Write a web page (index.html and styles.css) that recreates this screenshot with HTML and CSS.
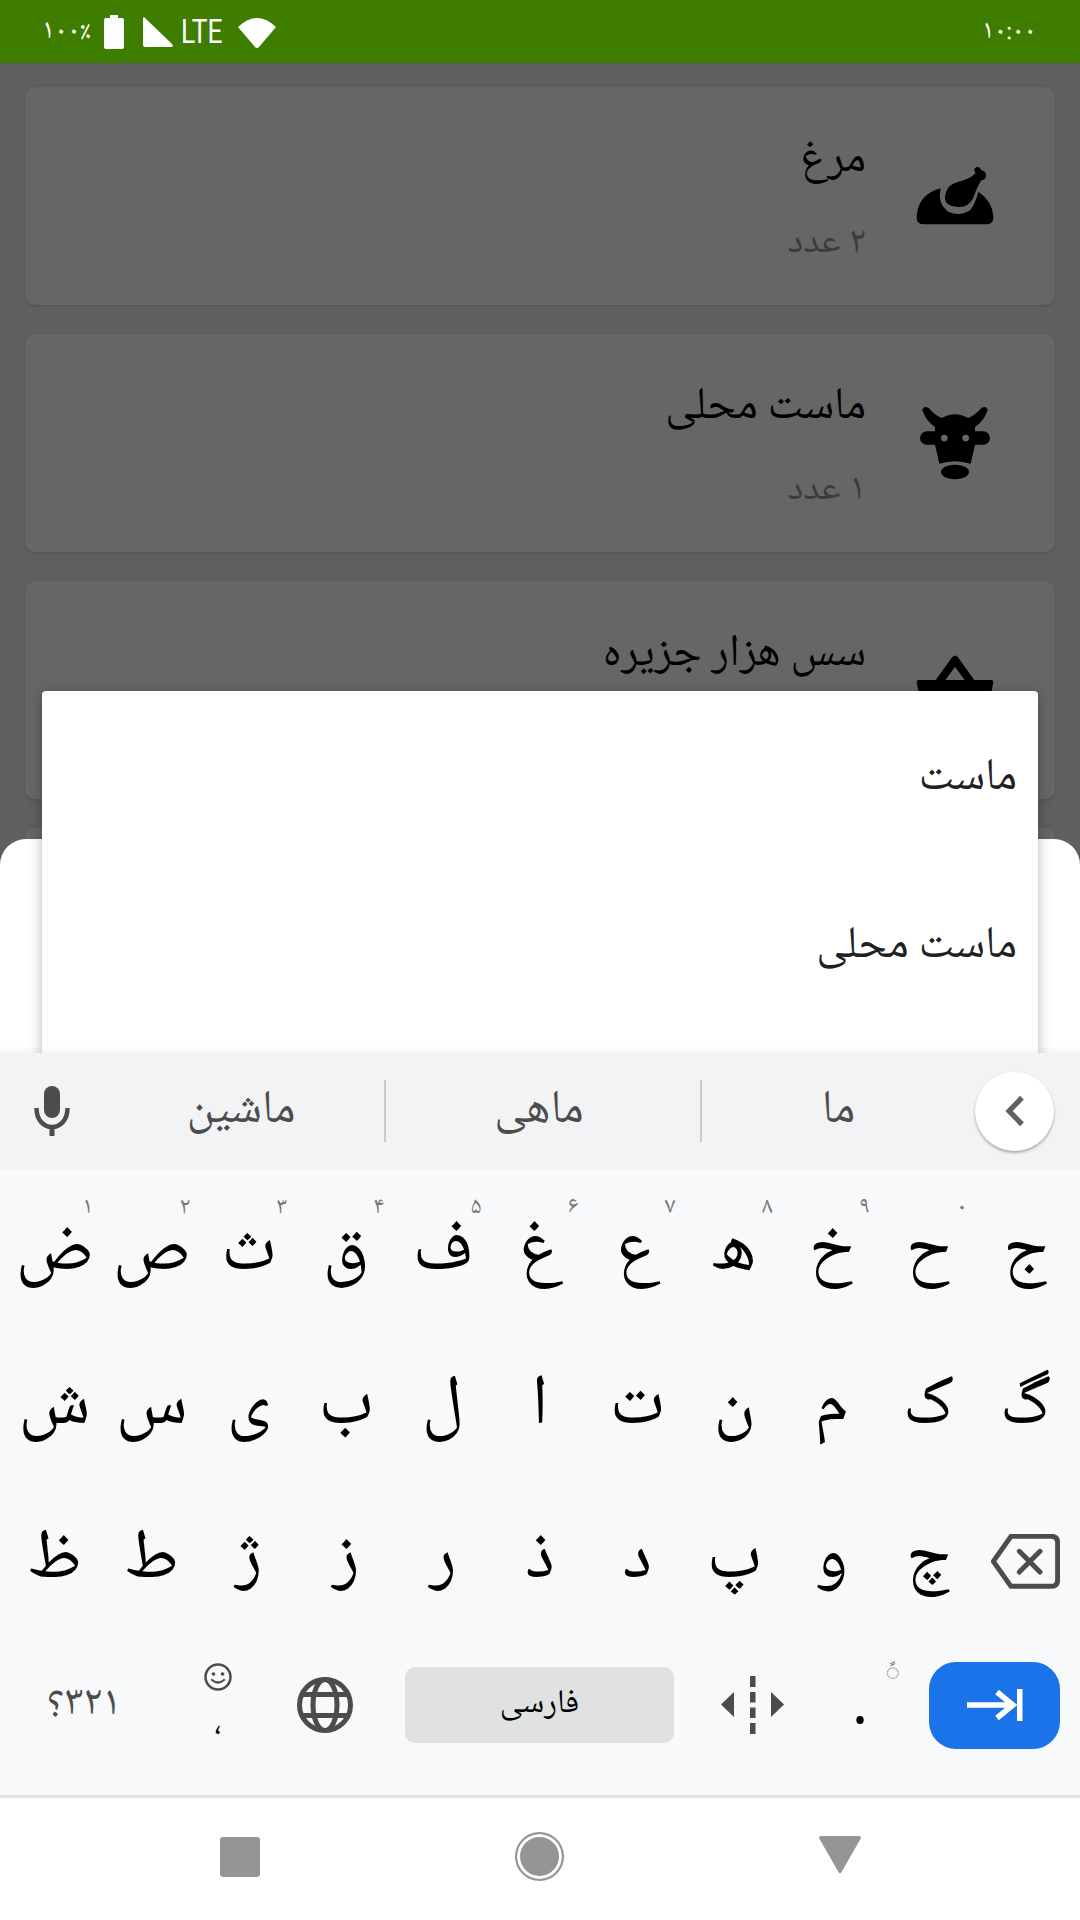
FILE: index.html
```html
<!DOCTYPE html>
<html lang="fa" dir="rtl">
<head>
    <meta charset="UTF-8">
    <title>Grocery list</title>
    <link rel="stylesheet" href="styles.css">
</head>
<body>
    <div class="status-bar" dir="ltr">
        <div class="status-left">
            <span class="battery-text">۱۰۰٪</span>
            <svg class="ic-battery" viewBox="0 0 20 34"><path d="M6 0h8v3h4a2 2 0 0 1 2 2v27a2 2 0 0 1-2 2H2a2 2 0 0 1-2-2V5a2 2 0 0 1 2-2h4z" fill="#fff"/></svg>
            <svg class="ic-signal" viewBox="0 0 30 30"><path d="M1 0 29 27q2 3-1 3H2q-2 0-2-2V1z" fill="#fff"/></svg>
            <span class="lte">LTE</span>
            <svg class="ic-wifi" viewBox="0 0 38 32"><path d="M0 11Q19-7 38 11L21 31q-2 2-4 0z" fill="#fff"/></svg>
        </div>
        <span class="clock">۱۰:۰۰</span>
    </div>

    <div class="screen">
        <div class="list">
            <div class="card">
                <svg class="card-icon" viewBox="105 60 240 210">
                    <path d="M182 142Q115 160 110 225Q108 250 130 250H320Q342 250 340 225Q336 180 295 152Q285 190 270 208Q240 228 205 212Q172 190 182 142Z"/>
                    <path d="M195 165Q200 130 235 122Q270 115 287 96A10 10 0 1 1 303 88A10 10 0 1 1 304 118Q292 135 280 170Q265 200 235 198Q190 195 195 165Z"/>
                </svg>
                <div class="card-text">
                    <div class="card-title">مرغ</div>
                    <div class="card-sub">۲ عدد</div>
                </div>
            </div>
            <div class="card">
                <svg class="card-icon" viewBox="105 796 240 236">
                    <path d="M127 815Q130 800 145 807Q165 830 185 838Q225 815 265 838Q285 830 305 807Q320 800 323 815Q310 850 285 865V878H310A20 20 0 0 1 310 918H285L272 975Q225 960 178 975L165 918H140A20 20 0 0 1 140 878H165V865Q140 850 127 815Z"/>
                    <ellipse cx="225" cy="1000" rx="42" ry="22"/>
                    <circle cx="193" cy="898" r="10" fill="#666"/>
                    <circle cx="257" cy="898" r="10" fill="#666"/>
                </svg>
                <div class="card-text">
                    <div class="card-title">ماست محلی</div>
                    <div class="card-sub">۱ عدد</div>
                </div>
            </div>
            <div class="card">
                <svg class="card-icon" viewBox="0 0 80 70">
                    <path d="M40 5 22 30M40 5 58 30" fill="none" stroke="#000" stroke-width="8" stroke-linecap="round"/>
                    <path d="M4 25H76Q79 25 78 29L70 70H10L2 29Q1 25 4 25Z"/>
                </svg>
                <div class="card-text">
                    <div class="card-title">سس هزار جزیره</div>
                    <div class="card-sub">۱ عدد</div>
                </div>
            </div>
            <div class="card"></div>
        </div>
        <div class="sheet"></div>
        <div class="popup">
            <div class="popup-item">ماست</div>
            <div class="popup-item">ماست محلی</div>
        </div>
    </div>

    <div class="keyboard">
        <div class="strip" dir="ltr">
            <div class="strip-mic">
                <svg viewBox="0 0 36 50"><rect x="10" y="0" width="16" height="32" rx="8" fill="#4c4c4c"/><path d="M2.500 22c0 12 7 19 15.500 19s15.500-7 15.500-19" fill="none" stroke="#4c4c4c" stroke-width="4.500"/><rect x="15.500" y="40" width="5" height="10" fill="#4c4c4c"/></svg>
            </div>
            <div class="sugg">ماشین</div>
            <div class="sugg-sep"></div>
            <div class="sugg sugg-mid">ماهی</div>
            <div class="sugg-sep"></div>
            <div class="sugg">ما</div>
            <div class="strip-back">
                <svg viewBox="0 0 18 30"><path d="M15.500 2.500 3.500 15l12 12.500" fill="none" stroke="#616161" stroke-width="5"/></svg>
            </div>
        </div>

        <div class="keys">
            <div class="key">ج</div>
            <div class="key"><span class="hint">۰</span>ح</div>
            <div class="key"><span class="hint">۹</span>خ</div>
            <div class="key"><span class="hint">۸</span>ه</div>
            <div class="key"><span class="hint">۷</span>ع</div>
            <div class="key"><span class="hint">۶</span>غ</div>
            <div class="key"><span class="hint">۵</span>ف</div>
            <div class="key"><span class="hint">۴</span>ق</div>
            <div class="key"><span class="hint">۳</span>ث</div>
            <div class="key"><span class="hint">۲</span>ص</div>
            <div class="key"><span class="hint">۱</span>ض</div>

            <div class="key">گ</div>
            <div class="key">ک</div>
            <div class="key">م</div>
            <div class="key">ن</div>
            <div class="key">ت</div>
            <div class="key">ا</div>
            <div class="key">ل</div>
            <div class="key">ب</div>
            <div class="key">ی</div>
            <div class="key">س</div>
            <div class="key">ش</div>

            <div class="key">
                <svg class="ic-backspace" viewBox="60 63 207 165"><path d="M120 70H240Q260 70 260 90V200Q260 220 240 220H120L67 145Z" fill="none" stroke="#4c4c4c" stroke-width="15" stroke-linejoin="round"/><path d="M145 115 207 177M207 115 145 177" fill="none" stroke="#4c4c4c" stroke-width="15" stroke-linecap="round"/></svg>
            </div>
            <div class="key">چ</div>
            <div class="key">و</div>
            <div class="key">پ</div>
            <div class="key">د</div>
            <div class="key">ذ</div>
            <div class="key">ر</div>
            <div class="key">ز</div>
            <div class="key">ژ</div>
            <div class="key">ط</div>
            <div class="key">ظ</div>
        </div>

        <div class="bottom-row" dir="ltr">
            <div class="bottom-cell symbols">؟۳۲۱</div>
            <div class="bottom-cell comma-key">
                <svg class="ic-smiley" viewBox="0 0 28 28"><circle cx="14" cy="14" r="12.500" fill="none" stroke="#4c4c4c" stroke-width="2.500"/><circle cx="9.500" cy="11" r="1.800" fill="#4c4c4c"/><circle cx="18.500" cy="11" r="1.800" fill="#4c4c4c"/><path d="M8 17q6 5 12 0" fill="none" stroke="#4c4c4c" stroke-width="2.200" stroke-linecap="round"/></svg>
                <span class="comma">،</span>
            </div>
            <div class="bottom-cell">
                <svg class="ic-globe" viewBox="0 0 56 56"><g fill="none" stroke="#4c4c4c" stroke-width="5"><circle cx="28" cy="28" r="25.500"/><ellipse cx="28" cy="28" rx="12" ry="25.500"/><path d="M5 17.500H51M5 38.500H51"/></g></svg>
            </div>
            <div class="bottom-cell">
                <div class="space-key">فارسی</div>
            </div>
            <div class="bottom-cell">
                <svg class="ic-cursor" viewBox="0 0 63 58"><path d="M13 16V41L0 28.500Z M50 16V41L63 28.500Z" fill="#4c4c4c"/><path d="M29 0h5.500v11H29zM29 16h5.500v10.500H29zM29 31.500h5.500V42H29zM29 47h5.500v11H29z" fill="#4c4c4c"/></svg>
            </div>
            <div class="bottom-cell period-key">
                <span class="period-hint">◌ً</span>
                <span class="period">.</span>
            </div>
            <div class="bottom-cell">
                <div class="enter-key">
                    <svg viewBox="0 0 56 32"><path d="M0 16H46M30 3 46 16 30 29" fill="none" stroke="#fff" stroke-width="5.500"/><rect x="50" y="0" width="5.500" height="32" fill="#fff"/></svg>
                </div>
            </div>
        </div>
    </div>

    <div class="nav-bar" dir="ltr">
        <span class="nav-square"></span>
        <span class="nav-circle"></span>
        <svg class="nav-tri" viewBox="0 0 42 37"><path d="M2 0H40Q42 0 42 2L22 37H20L0 2Q0 0 2 0Z" fill="#959595"/></svg>
    </div>
</body>
</html>
```

FILE: styles.css
```css
* {
    margin: 0;
    padding: 0;
    box-sizing: border-box;
}

body {
    width: 1080px;
    height: 1920px;
    overflow: hidden;
    display: flex;
    flex-direction: column;
    font-family: "Noto Naskh Arabic", "Noto Sans Arabic", "DejaVu Sans", sans-serif;
    background: #fff;
}

/* Status bar */
.status-bar {
    height: 63px;
    flex: none;
    background: #3f7d00;
    color: #fff;
    display: flex;
    align-items: center;
    justify-content: space-between;
    padding: 0 44px 0 42px;
}

.status-left {
    display: flex;
    align-items: center;
}

.battery-text {
    font-size: 28px;
    width: 52px;
}

.clock {
    font-size: 27px;
}

.lte {
    width: 43px;
    font-family: "Roboto", sans-serif;
    font-size: 33px;
    transform: scaleX(0.8);
    transform-origin: left center;
    margin: 0 14px 0 8px;
}

.ic-battery { width: 20px; height: 34px; margin: 0 19px 0 10px; }
.ic-signal { width: 30px; height: 30px; }
.ic-wifi { width: 38px; height: 32px; }

/* App content behind the dim */
.screen {
    height: 990px;
    flex: none;
    position: relative;
    overflow: hidden;
    background: #5f5f5f;
}

.list {
    display: flex;
    flex-direction: column;
    gap: 29px;
    padding: 24px 25px;
}

.card {
    height: 218px;
    flex: none;
    background: #666;
    border-radius: 10px;
    box-shadow: 0 1px 3px rgba(0, 0, 0, 0.15);
    display: flex;
    align-items: center;
    padding-right: 60px;
    gap: 49px;
}

.card-icon {
    width: 80px;
    height: auto;
    flex: none;
}

.card-text {
    padding-top: 7px;
}

.card-title {
    font-size: 45px;
    color: #000;
    margin-bottom: 11px;
}

.card-sub {
    font-size: 38px;
    color: #3c3c3c;
}

.sheet {
    position: absolute;
    top: 776px;
    left: 0;
    right: 0;
    height: 300px;
    background: #fff;
    border-radius: 26px 26px 0 0;
}

.popup {
    position: absolute;
    top: 628px;
    left: 42px;
    width: 996px;
    height: 400px;
    background: #fff;
    border-radius: 4px 4px 0 0;
    box-shadow: 0 3px 14px rgba(0, 0, 0, 0.28);
}

.popup-item {
    height: 168px;
    display: flex;
    align-items: center;
    padding: 8px 21px 0;
    font-size: 45px;
    color: #212121;
}

/* Keyboard */
.keyboard {
    height: 742px;
    flex: none;
    position: relative;
    background: #f8f9fb;
}

.strip {
    height: 116px;
    background: #f1f3f5;
    box-shadow: 0 -3px 6px rgba(0, 0, 0, 0.05);
    display: grid;
    grid-template-columns: 98px 286px 2px 314px 2px 273px 105px;
    align-items: center;
}

.strip-mic {
    padding-left: 34px;
    display: flex;
}

.strip-mic svg {
    width: 36px;
    height: 50px;
}

.sugg {
    padding-top: 2px;
    text-align: center;
    font-size: 47px;
    color: #4c4c4c;
}

.sugg-mid {
    padding-right: 8px;
}

.sugg-sep {
    height: 62px;
    background: #c9cbcd;
}

.strip-back {
    width: 79px;
    height: 79px;
    border-radius: 50%;
    background: #fff;
    box-shadow: 0 2px 3px rgba(0, 0, 0, 0.3);
    display: flex;
    align-items: center;
    justify-content: center;
}

.strip-back svg {
    width: 20px;
    height: 32px;
}

.keys {
    display: grid;
    grid-template-columns: repeat(11, 1fr);
    padding: 0 6px;
}

.key {
    height: 154px;
    padding-top: 14px;
    position: relative;
    display: flex;
    align-items: center;
    justify-content: center;
    font-size: 71px;
    color: #000;
}

.hint {
    position: absolute;
    top: 18px;
    right: 10px;
    font-size: 24px;
    color: #777;
}

.ic-backspace {
    width: 69px;
    height: 55px;
}

.bottom-row {
    height: 148px;
    display: grid;
    grid-template-columns: 168px 100px 114px 315px 111px 104px 168px;
}

.bottom-cell {
    display: flex;
    align-items: center;
    justify-content: center;
}

.symbols {
    font-size: 42px;
    color: #4c4c4c;
    unicode-bidi: bidi-override;
    direction: ltr;
}

.comma-key {
    flex-direction: column;
    gap: 7px;
    padding-top: 5px;
}

.ic-smiley {
    width: 28px;
    height: 28px;
}

.comma {
    font-size: 32px;
    color: #000;
}

.ic-globe {
    width: 56px;
    height: 56px;
}

.space-key {
    width: 269px;
    height: 76px;
    background: #e0e2e2;
    border-radius: 10px;
    display: flex;
    align-items: center;
    justify-content: center;
    font-size: 33px;
    color: #000;
}

.ic-cursor {
    width: 63px;
    height: 58px;
}

.period-key {
    position: relative;
}

.period {
    font-size: 60px;
    color: #000;
    padding-top: 10px;
}

.period-hint {
    position: absolute;
    top: 20px;
    right: 12px;
    font-size: 24px;
    color: #777;
}

.enter-key {
    width: 131px;
    height: 87px;
    margin-left: -3px;
    background: #1a73e8;
    border-radius: 27px;
    display: flex;
    align-items: center;
    justify-content: center;
}

.enter-key svg {
    width: 56px;
    height: 32px;
}

/* Navigation bar */
.nav-bar {
    flex: 1;
    border-top: 3px solid #dfe1e3;
    padding-bottom: 5px;
    display: flex;
    align-items: center;
    justify-content: center;
    gap: 255px;
}

.nav-square {
    width: 40px;
    height: 40px;
    background: #959595;
    border-radius: 3px;
}

.nav-circle {
    width: 49px;
    height: 49px;
    border-radius: 50%;
    background: #959595;
    border: 2px solid #959595;
    box-shadow: inset 0 0 0 3px #fff;
}

.nav-tri {
    width: 42px;
    height: 37px;
    margin-bottom: 4px;
}
```
